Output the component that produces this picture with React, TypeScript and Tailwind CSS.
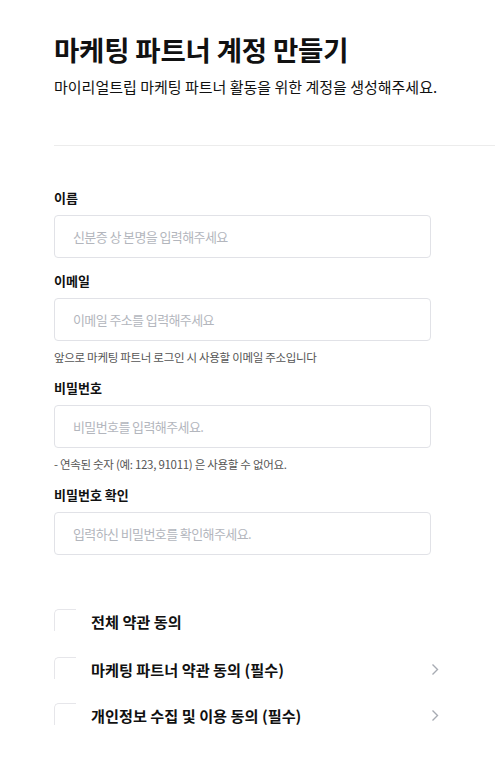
const font = {
  fontFamily: '"Noto Sans CJK KR", "Noto Sans", sans-serif',
}

function Field({
  label,
  placeholder,
  help,
}: {
  label: string
  placeholder: string
  help?: string
}) {
  return (
    <div className="flex flex-col">
      <label className="text-[13px] font-semibold leading-5 text-[#111]">{label}</label>
      <input
        className="mt-[7px] h-[43px] w-[377px] rounded-[4px] border border-[#e1e2e7] px-[18px] text-[13px] tracking-[-0.6px] text-[#111] outline-none placeholder:text-[#b3b6bd]"
        placeholder={placeholder}
        style={font}
      />
      {help && <p className="mt-[8px] text-[11.5px] leading-4 tracking-[-0.3px] text-[#555]">{help}</p>}
    </div>
  )
}

function Agree({ text, arrow }: { text: string; arrow?: boolean }) {
  return (
    <div className="flex h-[46px] w-[390px] items-center">
      <div className="mb-[2px] h-[22px] w-[22px] rounded-tl-[5px] border-l border-t border-[#e6e6ea]" />
      <span className="ml-[15px] flex-1 text-[15.2px] font-bold text-[#111]">{text}</span>
      {arrow && (
        <svg width="8" height="13" viewBox="0 0 8 13" className="mr-[5px]" fill="none">
          <path d="M1.5 1.5l5 5-5 5" stroke="#a7abb3" strokeWidth="1.4" />
        </svg>
      )}
    </div>
  )
}

export default function App() {
  return (
    <div className="min-h-screen overflow-hidden bg-white pl-[54px] pt-[30px]" style={font}>
      <h1 className="text-[27.5px] font-bold leading-[39px] tracking-[-0.2px] text-[#111]">
        마케팅 파트너 계정 만들기
      </h1>
      <p className="mt-[6px] text-[15px] leading-6 text-[#111]">
        마이리얼트립 마케팅 파트너 활동을 위한 계정을 생성해주세요.
      </p>
      <div className="mt-[46px] h-px w-[500px] bg-[#ececec]" />

      <div className="mt-[42px] flex flex-col gap-[13px]">
        <Field label="이름" placeholder="신분증 상 본명을 입력해주세요" />
        <Field
          label="이메일"
          placeholder="이메일 주소를 입력해주세요"
          help="앞으로 마케팅 파트너 로그인 시 사용할 이메일 주소입니다"
        />
        <Field
          label="비밀번호"
          placeholder="비밀번호를 입력해주세요."
          help="- 연속된 숫자 (예: 123, 91011) 은 사용할 수 없어요."
        />
        <Field label="비밀번호 확인" placeholder="입력하신 비밀번호를 확인해주세요." />
      </div>

      <div className="mt-[43px] flex flex-col">
        <Agree text="전체 약관 동의" />
        <div className="h-[2px]" />
        <Agree text="마케팅 파트너 약관 동의 (필수)" arrow />
        <Agree text="개인정보 수집 및 이용 동의 (필수)" arrow />
      </div>
    </div>
  )
}
